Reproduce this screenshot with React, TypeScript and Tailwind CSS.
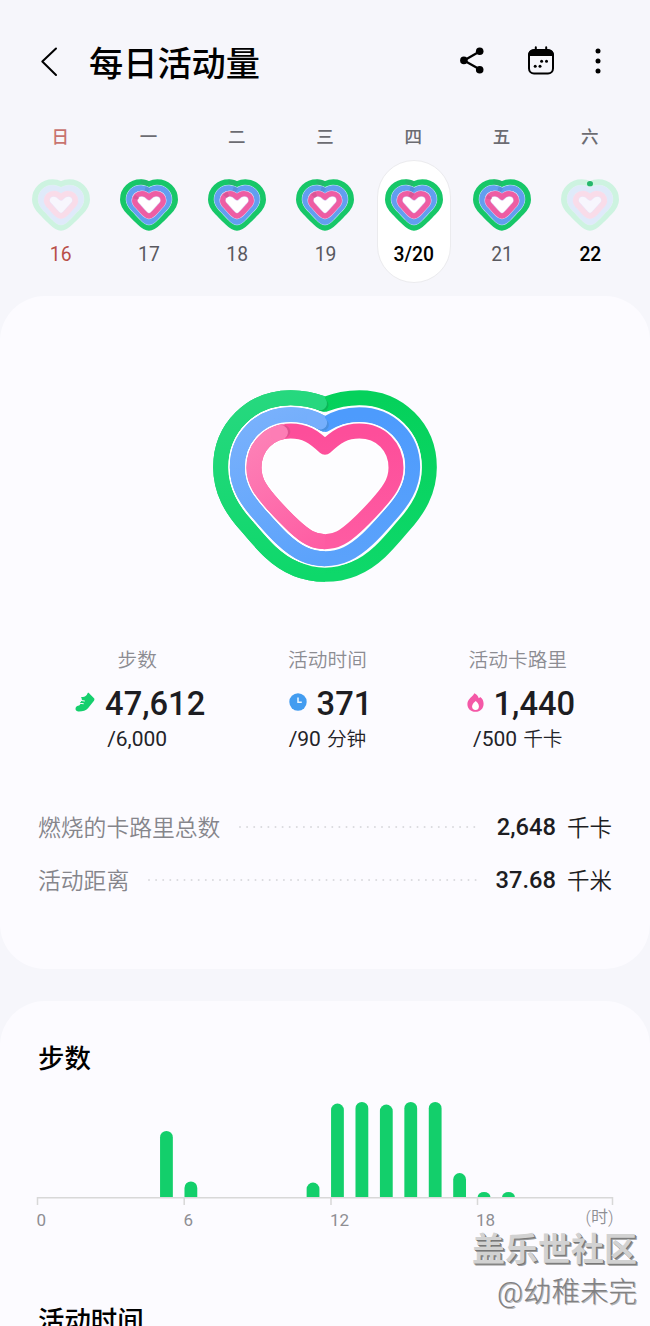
import type { ReactNode } from 'react';
import clsx from 'clsx';

const days = [
  { week: '日', date: '16', state: 'empty' },
  { week: '一', date: '17', state: 'full', tip: 'M106 102 Q107 98 110 94' },
  { week: '二', date: '18', state: 'full', tip: 'M110 94 Q114 89 120 87' },
  { week: '三', date: '19', state: 'full', tip: 'M110 94 Q114 89 120 87' },
  { week: '四', date: '3/20', state: 'full', tip: 'M132 87 Q138 89 143 93' },
  { week: '五', date: '21', state: 'full', tip: 'M106 102 Q107 98 110 94' },
  { week: '六', date: '22', state: 'started' },
];

// hour of day -> bar height in px
const steps = [
  { hour: 5, height: 66 },
  { hour: 6, height: 15.5 },
  { hour: 11, height: 14.5 },
  { hour: 12, height: 93.5 },
  { hour: 13, height: 95 },
  { hour: 14, height: 92.5 },
  { hour: 15, height: 95 },
  { hour: 16, height: 95 },
  { hour: 17, height: 24 },
  { hour: 18, height: 5 },
  { hour: 19, height: 5 },
];

const MINI_GREEN = 'M146 58 C137 54 130 52 121 52 C92 52 68 74 68 104 C68 121 77 131 88 142 C98 152 105 160 115 169 C126 180 135 188 146 188 C157 188 166 180 177 169 C187 160 194 152 204 142 C215 131 224 121 224 104 C224 74 200 52 171 52 C162 52 155 54 146 58 Z';
const MINI_BLUE = 'M146 78 C138 72 132 69 122 69 C101 69 86 84 86 104 C86 116 92 122 101 132 C110 141 117 149 125 157 C133 166 139 171 146 171 C153 171 159 166 167 157 C175 149 182 141 191 132 C200 122 206 116 206 104 C206 84 191 69 170 69 C160 69 154 72 146 78 Z';
const MINI_PINK = 'M146 97 C140 90 134 86 125 86 C112 86 103 95 103 107 C103 115 108 119 114 125 C121 133 127 140 133 146 C138 151 142 153 146 153 C150 153 154 151 159 146 C165 140 171 133 178 125 C184 119 189 115 189 107 C189 95 180 86 167 86 C158 86 152 90 146 97 Z';

function MiniHeart({ state, tip }: { state: string; tip?: string }) {
  const full = state === 'full';
  return (
    <svg className="w-[58px] h-[52px] shrink-0" viewBox="59 42 174 156" fill="none" strokeLinejoin="round">
      <path d={MINI_GREEN} stroke={full ? '#17c768' : '#cdf3e0'} strokeWidth="18" />
      {full && <path d="M121 52 C130 52 137 54 144 57" stroke="#22b96b" strokeWidth="17" />}
      <path d={MINI_BLUE} fill={full ? '#ffffff' : '#f7f6fd'} stroke={full ? '#c4e8f2' : '#e0f1f1'} strokeWidth="19.5" />
      <path d={MINI_BLUE} stroke={full ? '#629ef0' : '#dfeafa'} strokeWidth="16.5" />
      {full && <path d="M134 71 Q140 73 145 77" stroke="#5890dc" strokeWidth="16" />}
      <path d={MINI_PINK} stroke={full ? '#dcd0f4' : '#ece3f6'} strokeWidth="19" />
      <path d={MINI_PINK} stroke={full ? '#ee5da3' : '#f9dce9'} strokeWidth="16" />
      {full && <path d={tip} stroke="#d95697" strokeWidth="15" />}
      {state === 'started' && <ellipse cx="146" cy="56" rx="9" ry="8" fill="#25b76c" />}
    </svg>
  );
}

const GREEN = 'M375 88 C340 74 312 68 272 68 C154 68 62 158 62 277 C62 350 96 404 138 451 C162 478 184 506 210 530 C261 578 312 598 375 598 C438 598 489 578 540 530 C566 506 588 478 612 451 C654 404 688 350 688 277 C688 158 596 68 478 68 C438 68 410 74 375 88 Z';
const BLUE = 'M375 148 C342 127 313 119 272 119 C181 119 112 187 112 277 C112 335 143 379 180 420 C202 445 223 470 247 492 C291 533 328 551 375 551 C422 551 459 533 503 492 C527 470 548 445 570 420 C607 379 638 335 638 277 C638 187 569 119 478 119 C437 119 408 127 375 148 Z';
const PINK = 'M375 217 C340 184 315 168 272 168 C208 168 162 215 162 278 C162 322 186 352 221 391 C242 414 261 434 283 454 C317 485 340 500 375 500 C410 500 433 485 467 454 C489 434 508 414 529 391 C564 352 588 322 588 278 C588 215 542 168 478 168 C435 168 410 184 375 217 Z';

function ActivityHeart() {
  return (
    <svg className="w-[226px] h-[194px]" viewBox="36 42 678 582" fill="none" strokeLinejoin="round">
      <defs>
        <linearGradient id="green" gradientUnits="userSpaceOnUse" x1="300" y1="0" x2="375" y2="600">
          <stop offset="0" stopColor="#28d880" />
          <stop offset="1" stopColor="#0ed86a" />
        </linearGradient>
        <linearGradient id="blue" gradientUnits="userSpaceOnUse" x1="200" y1="100" x2="375" y2="560">
          <stop offset="0" stopColor="#79b1fc" />
          <stop offset="1" stopColor="#5ba2fb" />
        </linearGradient>
        <linearGradient id="pink" gradientUnits="userSpaceOnUse" x1="180" y1="160" x2="400" y2="510">
          <stop offset="0" stopColor="#fd82b7" />
          <stop offset="1" stopColor="#fe5ba2" />
        </linearGradient>
        <linearGradient id="greenRight" gradientUnits="userSpaceOnUse" x1="0" y1="70" x2="0" y2="600">
          <stop offset="0" stopColor="#05d15b" />
          <stop offset="1" stopColor="#0ed86a" />
        </linearGradient>
        <linearGradient id="blueRight" gradientUnits="userSpaceOnUse" x1="0" y1="120" x2="0" y2="551">
          <stop offset="0" stopColor="#4d9bfd" />
          <stop offset="1" stopColor="#5ba2fb" />
        </linearGradient>
        <linearGradient id="pinkRight" gradientUnits="userSpaceOnUse" x1="0" y1="170" x2="0" y2="500">
          <stop offset="0" stopColor="#fd4e9a" />
          <stop offset="1" stopColor="#fe5ba2" />
        </linearGradient>
        <clipPath id="left"><rect x="0" y="0" width="375" height="700" /></clipPath>
        <clipPath id="leftPink"><path d="M0 0 H254 V300 H375 V700 H0 Z" /></clipPath>
      </defs>
      <path d={GREEN} stroke="url(#greenRight)" strokeWidth="45" />
      <path d={GREEN} stroke="url(#green)" strokeWidth="45" clipPath="url(#left)" />
      <path d="M360 87 L367 90" stroke="#0cb656" strokeWidth="37" strokeLinecap="round" />
      <path d="M340 76 Q350 78 360 85" stroke="#27d77e" strokeWidth="42" strokeLinecap="round" />
      <path d={BLUE} stroke="#ffffff" strokeWidth="54" fill="#fdfdff" />
      <path d={BLUE} stroke="url(#blueRight)" strokeWidth="45" />
      <path d={BLUE} stroke="url(#blue)" strokeWidth="45" clipPath="url(#left)" />
      <path d="M360 144 L368 149" stroke="#4a90e0" strokeWidth="37" strokeLinecap="round" />
      <path d="M340 131 Q350 135 361 143" stroke="#76affc" strokeWidth="41" strokeLinecap="round" />
      <path d={PINK} stroke="#ffffff" strokeWidth="54" />
      <path d={PINK} stroke="url(#pinkRight)" strokeWidth="45" />
      <path d={PINK} stroke="url(#pink)" strokeWidth="45" clipPath="url(#leftPink)" />
      <path d="M246 171 L252 170" stroke="#df508f" strokeWidth="38" strokeLinecap="round" />
      <path d="M232 175 L243 172" stroke="#fd7db5" strokeWidth="42" strokeLinecap="round" />
    </svg>
  );
}

function ShoeIcon() {
  return (
    <svg className="w-5 h-5" viewBox="0 0 20 20">
      <path
        d="M12.6 1.2 C13 .6 13.6.6 14.1 1.2 L19 6.3 C19.7 7.1 19.5 8 18.8 9 L13 16.2 C10.8 18.8 7.5 19.5 3.2 19.4 C1 19.2.2 17.8.6 16 C1 14.2 2.4 13.9 4.2 13.4 L5.3 12.2 L4.9 10.6 L6.2 9.7 L5.5 8.2 L7.2 7.5 L6.2 5.8 C6 5.2 6.5 4.9 7.2 5 C9.5 5.3 11.5 4 12.6 1.2 Z"
        fill="#15cf6d"
      />
      <path d="M5.5 8.4 L9.4 9 M4.9 11.3 L8.3 11.7" stroke="#fcfbff" strokeWidth="1" strokeLinecap="round" />
    </svg>
  );
}

function ClockIcon() {
  return (
    <svg className="w-[18px] h-[18px]" viewBox="0 0 18 18" fill="none">
      <circle cx="9" cy="9" r="8.7" fill="#439cf0" />
      <path d="M9 4.5 V9.3 H12.8" stroke="#eef7ff" strokeWidth="1.5" />
    </svg>
  );
}

function FlameIcon() {
  return (
    <svg className="w-[17px] h-[19px]" viewBox="0 0 17 19">
      <path d="M7.3.2 C10 1.3 11.2 3.2 11.7 5.3 C12.4 5 12.7 4.5 13.1 4 C15.5 5.5 16.6 7.9 16.6 10.7 C16.6 15.5 13.2 18.8 8.5 18.8 C3.7 18.8.4 15.6.4 11.2 C.4 7.5 2.7 5.7 4.8 3.5 C6 2.3 6.8 1.4 7.3.2 Z" fill="#f458a7" />
      <path d="M8.7 8 C10.6 9.5 11.9 11.2 11.9 13.4 C11.9 15.7 10.5 17 8.5 17 C6.4 17 5.1 15.7 5.1 13.5 C5.1 11.3 6.8 9.6 8.7 8 Z" fill="#fff" />
    </svg>
  );
}

function Stat({ label, icon, value, goal, unit }: { label: string; icon: ReactNode; value: string; goal: string; unit?: string }) {
  return (
    <div className="flex flex-col items-center">
      <div className="h-6 text-[19.7px] leading-6 font-[350] text-[#8c8c92]">{label}</div>
      <div className="mt-[11px] flex h-10 items-center gap-[10px] pl-[6px]">
        <span className="-mt-[4px]">{icon}</span>
        <span className="text-[32.7px] leading-10 font-medium text-[#1d1d22]">{value}</span>
      </div>
      <div className="mt-px flex h-7 items-baseline gap-[6px] text-[21px] leading-7 text-[#232328]">
        {goal}
        {unit && <span className="text-[19.7px] font-[350]">{unit}</span>}
      </div>
    </div>
  );
}

function TotalRow({ label, value, unit }: { label: string; value: string; unit: string }) {
  return (
    <div className="flex h-[53px] items-center">
      <span className="pt-[3px] text-[22.8px] font-[350] text-[#85858b]">{label}</span>
      <svg className="ml-[18px] mr-[17px] h-1 flex-1">
        <line x1="2" y1="1" x2="100%" y2="1" stroke="#dadade" strokeWidth="2" strokeLinecap="round" strokeDasharray="0 7.1" />
      </svg>
      <span className="text-[23.7px] font-medium text-[#1d1d22]">{value}</span>
      <span className="ml-[11px] pt-[3px] text-[22.5px] font-[350] text-[#1d1d22]">{unit}</span>
    </div>
  );
}

function StepsChart() {
  return (
    <svg className="block w-[650px] h-[140px]" viewBox="0 1095 650 140" fontSize="17" fill="#8e8e93">
      <path d="M37.5 1205 V1197.8 H612.5 V1205 M184.2 1198 V1205 M331 1198 V1205 M477.5 1198 V1205" fill="none" stroke="#d8d8d8" strokeWidth="1.5" />
      {steps.map(({ hour, height }) => {
        const x = 37.9 + hour * 24.43;
        const r = Math.min(6.4, height);
        return (
          <path
            key={hour}
            d={`M${x} 1197 V${1197 - height + r} a6.4 ${r} 0 0 1 12.8 0 V1197 Z`}
            fill="#13cf6b"
          />
        );
      })}
      <text x="36.5" y="1225.5">0</text>
      <text x="183.5" y="1225.5">6</text>
      <text x="330" y="1225.5">12</text>
      <text x="476" y="1225.5">18</text>
      <text x="613.5" y="1223" textAnchor="end" fontWeight="350">(时)</text>
    </svg>
  );
}

export default function App() {
  return (
    <div className="relative flex h-[1326px] w-[650px] flex-col overflow-hidden bg-[#f6f6fb] font-[Roboto,'Noto_Sans_CJK_SC',sans-serif]">
      <header className="flex h-[124px] shrink-0 items-center pl-[40px]">
        <svg className="w-[18px] h-[30px]" viewBox="0 0 18 30" fill="none" stroke="#000" strokeWidth="2" strokeLinecap="round" strokeLinejoin="round">
          <path d="M16 1.5 L2.3 14.5 L16 28" />
        </svg>
        <h1 className="mt-[3px] ml-[31px] w-[369px] text-[34.2px] leading-[50px] font-medium text-black">每日活动量</h1>
        <svg className="mt-[-3px] ml-[2px] w-[24px] h-[27px]" viewBox="0 0 24 27" fill="#000">
          <path d="M20 4.2 L4 13.5 L20 22.6" fill="none" stroke="#000" strokeWidth="2.3" />
          <circle cx="19.7" cy="4.2" r="3.8" />
          <circle cx="3.9" cy="13.4" r="3.8" />
          <circle cx="19.7" cy="22.7" r="3.8" />
        </svg>
        <svg className="ml-[43px] mt-[-4px] w-[28px] h-[29px]" viewBox="0 0 28 29">
          <rect x="2" y="4" width="24" height="23.4" rx="5" fill="none" stroke="#000" strokeWidth="2" />
          <path d="M1 10 C1 6 3 3.5 7 3.5 H21 C25 3.5 27 6 27 10 Z" />
          <path d="M8.8 1.3 V5 M19.2 1.3 V5" stroke="#000" strokeWidth="2" strokeLinecap="round" />
          <circle cx="14.6" cy="15.3" r="1.5" />
          <circle cx="19.5" cy="15.3" r="1.5" />
          <circle cx="8.2" cy="20.3" r="1.5" />
          <circle cx="13" cy="20.3" r="1.5" />
        </svg>
        <svg className="ml-[40px] mt-[-2px] w-[6px] h-[26px]" viewBox="0 0 6 26">
          <circle cx="3" cy="3" r="2.5" />
          <circle cx="3" cy="13" r="2.5" />
          <circle cx="3" cy="23" r="2.5" />
        </svg>
      </header>

      <div className="grid h-[172px] shrink-0 grid-cols-7 px-4">
        {days.map(({ week, date, state, tip }, i) => (
          <div key={date} className="flex flex-col items-center">
            <div className={clsx('mt-[2px] h-[22px] text-[17.5px] leading-[22px] font-medium', i === 0 ? 'text-[#c87470]' : 'text-[#6c6c72]')}>{week}</div>
            <div
              className={clsx(
                'mt-[12px] ml-px flex h-[123px] w-[74px] flex-col items-center rounded-full border pt-[18px]',
                i === 4 ? 'border-[#ebebee] bg-white' : 'border-transparent',
              )}
            >
              <MiniHeart state={state} tip={tip} />
              <span
                className={clsx(
                  'mt-[12px] text-[19.3px] leading-6',
                  i === 0 && 'text-[#b94f48]',
                  (i === 4 || i === 6) && 'font-medium text-black',
                  i !== 0 && i !== 4 && i !== 6 && 'text-[#59595f]',
                )}
              >
                {date}
              </span>
            </div>
          </div>
        ))}
      </div>

      <section className="flex h-[673px] shrink-0 flex-col rounded-[45px] bg-[#fcfbff] pt-[93px]">
        <div className="flex justify-center">
          <ActivityHeart />
        </div>
        <div className="mt-[66px] ml-[42px] grid w-[571px] grid-cols-3">
          <Stat label="步数" icon={<ShoeIcon />} value="47,612" goal="/6,000" />
          <Stat label="活动时间" icon={<ClockIcon />} value="371" goal="/90" unit="分钟" />
          <Stat label="活动卡路里" icon={<FlameIcon />} value="1,440" goal="/500" unit="千卡" />
        </div>
        <div className="mt-[48px] px-[38px]">
          <TotalRow label="燃烧的卡路里总数" value="2,648" unit="千卡" />
          <TotalRow label="活动距离" value="37.68" unit="千米" />
        </div>
      </section>

      <section className="mt-8 flex h-[400px] shrink-0 flex-col rounded-t-[45px] bg-[#fcfbff] pt-[39px]">
        <h2 className="ml-[38px] h-[55px] text-[26.4px] leading-[38px] font-medium text-black">步数</h2>
        <StepsChart />
        <h2 className="mt-[67px] ml-[38px] text-[26.4px] leading-[38px] font-medium text-black">活动时间</h2>
      </section>

      {/* Community watermark */}
      <div className="absolute right-[13px] bottom-[12px] flex flex-col items-end whitespace-nowrap">
        <span className="text-[33px] leading-[45px] font-bold text-[#d2d2d2] [text-shadow:1px_1px_0_#777,2px_2px_0_#999]">盖乐世社区</span>
        <span className="text-[28.5px] leading-[42px] font-light text-[#808082] [text-shadow:1px_1px_0_#b5b5b5]">@幼稚未完</span>
      </div>
    </div>
  );
}
